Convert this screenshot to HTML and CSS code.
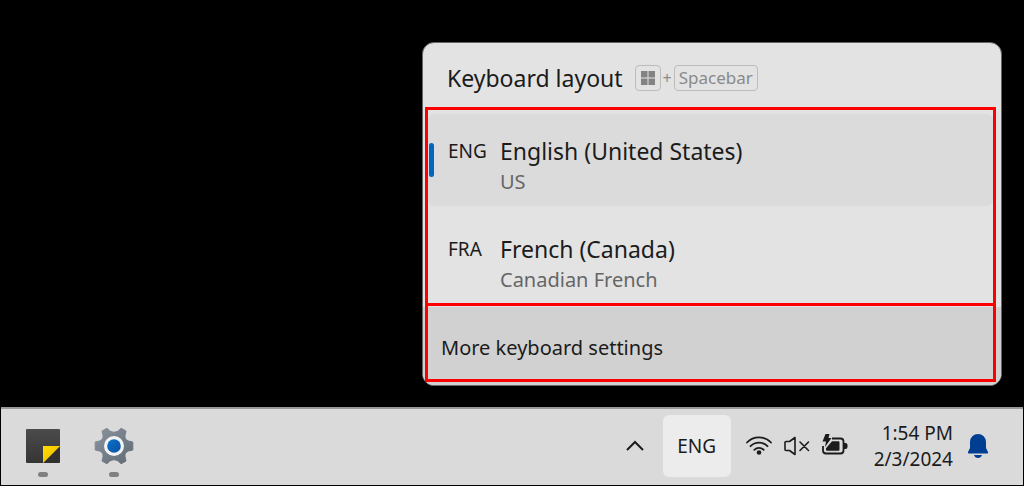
FILE: index.html
```html
<!DOCTYPE html>
<html lang="en">
<head>
<meta charset="utf-8">
<meta name="viewport" content="width=device-width, initial-scale=1">
<title>Keyboard layout</title>
<link rel="stylesheet" href="styles.css">
</head>
<body class="desktop">
<main class="workspace">
  <section class="flyout" aria-labelledby="flyout-title">
    <header class="flyout-header">
      <h1 class="flyout-title" id="flyout-title">Keyboard layout</h1>
      <div class="shortcut">
        <kbd class="key key-win"><svg width="14" height="14" viewBox="0 0 14 14" role="img" aria-label="Windows"><path fill="#838383" d="M0 0h6.500v6.500H0zM7.500 0H14v6.500H7.500zM0 7.500h6.500V14H0zM7.500 7.500H14V14H7.500z"/></svg></kbd>
        <span class="plus">+</span>
        <kbd class="key">Spacebar</kbd>
      </div>
    </header>
    <div class="layouts">
      <button class="layout layout-active" type="button" aria-pressed="true">
        <span class="layout-code">ENG</span>
        <span class="layout-text"><span class="layout-name">English (United States)</span><span class="layout-variant">US</span></span>
      </button>
      <button class="layout" type="button" aria-pressed="false">
        <span class="layout-code">FRA</span>
        <span class="layout-text"><span class="layout-name">French (Canada)</span><span class="layout-variant">Canadian French</span></span>
      </button>
      <div class="highlight"></div>
    </div>
    <footer class="flyout-footer">
      <a class="more" href="#settings">More keyboard settings</a>
      <div class="highlight highlight-footer"></div>
    </footer>
  </section>
</main>
<nav class="taskbar" aria-label="Taskbar">
  <div class="apps">
    <button class="app" type="button" aria-label="Sticky Notes">
      <svg width="40" height="40" viewBox="0 0 40 40">
        <defs>
          <linearGradient id="note" x1="0" y1="0" x2="0" y2="1"><stop offset="0" stop-color="#4b4b4b"/><stop offset="1" stop-color="#353535"/></linearGradient>
          <linearGradient id="fold" x1="0" y1="0" x2="1" y2="1"><stop offset="0" stop-color="#ffdc00"/><stop offset="1" stop-color="#efb900"/></linearGradient>
        </defs>
        <path fill="url(#note)" d="M4 3h32a1 1 0 0 1 1 1v16L20 37H4a1 1 0 0 1-1-1V4a1 1 0 0 1 1-1z"/>
        <path fill="#303030" d="M37 20v16a1 1 0 0 1-1 1H20z"/>
        <path fill="url(#fold)" d="M20 20h17L20 37z"/>
      </svg>
    </button>
    <button class="app" type="button" aria-label="Settings">
      <svg width="40" height="40" viewBox="0 0 40 40">
        <defs>
          <linearGradient id="gear" x1="0" y1="0" x2="1" y2="1"><stop offset="0" stop-color="#8b949d"/><stop offset="1" stop-color="#5f6a75"/></linearGradient>
          <linearGradient id="hub" x1="0" y1="0" x2="1" y2="1"><stop offset="0" stop-color="#0a73cc"/><stop offset="1" stop-color="#0b4fa0"/></linearGradient>
        </defs>
        <path fill="url(#gear)" stroke="url(#gear)" stroke-linejoin="round" d="M13 2.200L16 5.200Q20 7.500 24 5.200L27 2.200L32 5L31 9.500Q30.500 13.500 34.500 15L38.800 16V24L34.500 25Q30.500 26.500 31 30.500L32 35L27 37.800L24 34.800Q20 32.500 16 34.800L13 37.800L8 35L9 30.500Q9.500 26.500 5.500 25L1.200 24V16L5.500 15Q9.500 13.500 9 9.500L8 5Z"/>
        <circle cx="20" cy="20" r="10" fill="#f2f3f4"/>
        <circle cx="20" cy="20" r="6.800" fill="url(#hub)"/>
      </svg>
    </button>
  </div>
  <div class="tray">
    <button class="tray-icon chevron" type="button" aria-label="Show hidden icons">
      <svg width="20" height="20" viewBox="0 0 20 20" fill="none" stroke="#1b1b1b" stroke-width="2"><path d="M2 14l8-8 8 8"/></svg>
    </button>
    <button class="language" type="button">ENG</button>
    <button class="tray-icon status" type="button" aria-label="Network, volume and battery">
      <svg width="28" height="24" viewBox="0 0 28 24" fill="none" stroke="#1b1b1b" stroke-width="1.800" stroke-linecap="round"><path d="M2 8.500A16.500 16.500 0 0 1 26 8.500M5.500 12.200A12 12 0 0 1 22.500 12.200M9.300 15.800A6.700 6.700 0 0 1 18.700 15.800"/><circle cx="14" cy="18.500" r="2.300" fill="#1b1b1b" stroke="none"/></svg>
      <svg width="28" height="24" viewBox="0 0 28 24" fill="none" stroke="#1b1b1b" stroke-width="1.600" stroke-linejoin="round" stroke-linecap="round"><path d="M2 8.500q0-1 1-1h3.500L12 3.500v17L6.500 16.500H3q-1 0-1-1zM17 8l8.500 8.500M25.500 8L17 16.500"/></svg>
      <svg width="28" height="24" viewBox="0 0 28 24"><path d="M11 4.500H19.500Q22.500 4.500 22.500 7.500V16.500Q22.500 19.500 19.500 19.500H5Q2 19.500 2 16.500V12" fill="none" stroke="#1b1b1b" stroke-width="1.800"/><path fill="#1b1b1b" d="M11 7.300h6.500q1 0 1 1v7.400q0 1-1 1H6q-1 0-1-1v-1.500zM23 9h1.500q2 0 2 2v2q0 2-2 2H23zM4.500 0h4L7.500 4H10.500L4 13L5 7.500H1.500z"/></svg>
    </button>
    <button class="clock" type="button"><span>1:54 PM</span><span>2/3/2024</span></button>
    <button class="tray-icon" type="button" aria-label="Notifications">
      <svg width="22" height="26" viewBox="0 0 22 26" fill="#003e92"><path d="M11 1a8 8 0 0 1 8 8v6l2 4q.5 1.500-1 1.500H2q-1.500 0-1-1.500l2-4V9a8 8 0 0 1 8-8zM7 22h8q-1 3-4 3t-4-3z"/></svg>
    </button>
  </div>
</nav>
</body>
</html>
```
FILE: styles.css
```css
* { box-sizing: border-box; }
.desktop {
  margin: 0;
  min-height: 100vh;
  display: flex;
  flex-direction: column;
  background: #000;
  color: #1b1b1b;
  font-family: "Noto Sans", "Open Sans", sans-serif;
}
button {
  font: inherit;
  color: inherit;
  border: 0;
  padding: 0;
  background: none;
}
svg { display: block; }
.workspace {
  flex: 1;
  display: flex;
  justify-content: flex-end;
  align-items: flex-end;
  padding: 20px 22px 21px;
}
.flyout {
  width: 100%;
  max-width: 580px;
  background: #e3e3e3;
  border: 1px solid #666;
  border-radius: 12px;
}
.flyout-header {
  display: flex;
  align-items: center;
  gap: 12px;
  min-height: 64px;
  padding: 6px 24px 0;
}
.flyout-title {
  margin: 0;
  font-size: 23px;
  line-height: 32px;
  font-weight: 400;
}
.shortcut {
  display: flex;
  align-items: center;
  gap: 2px;
  color: #8a8a8a;
  font-size: 17px;
  line-height: 22px;
}
.key {
  display: flex;
  align-items: center;
  padding: 0 4px;
  min-height: 26px;
  border: 1px solid #bcbcbc;
  border-radius: 4px;
  font-family: inherit;
  font-size: 17px;
}
.key-win { padding: 0 5px; }
.plus { font-size: 16px; }
.layouts {
  position: relative;
  display: grid;
  gap: 6px;
  padding: 7px 8px 3px 5px;
}
.layout {
  position: relative;
  display: flex;
  min-height: 92px;
  padding: 20px 20px 0;
  border-radius: 6px;
  text-align: left;
}
.layout-active { background: #dbdbdb; }
.layout-active::before {
  content: "";
  position: absolute;
  left: 1px;
  top: 29px;
  width: 5px;
  height: 34px;
  border-radius: 3px;
  background: #0067c0;
}
.layout-code {
  width: 52px;
  font-size: 19px;
  line-height: 34px;
}
.layout-text { display: grid; align-content: start; }
.layout-name { font-size: 23px; line-height: 34px; }
.layout-variant { font-size: 20px; line-height: 28px; color: #666; }
.highlight {
  position: absolute;
  inset: 0 5px 1px 2px;
  border: 3px solid #f00;
  pointer-events: none;
}
.highlight-footer { inset: -4px 5px 3px 2px; }
.flyout-footer {
  position: relative;
  min-height: 78px;
  display: flex;
  align-items: center;
  padding: 4px 18px 0;
  background: #d1d1d1;
  border-radius: 0 0 11px 11px;
}
.more { color: inherit; text-decoration: none; font-size: 20px; line-height: 28px; }
.taskbar {
  display: flex;
  justify-content: space-between;
  min-height: 78px;
  margin: 0 1px 1px;
  padding: 0 34px 0 22px;
  background: #dadada;
  border-top: 2px solid #999;
}
.apps { display: flex; gap: 31px; }
.app {
  display: flex;
  flex-direction: column;
  align-items: center;
  padding-top: 17px;
  gap: 6px;
}
.app::after {
  content: "";
  width: 10px;
  height: 5px;
  border-radius: 3px;
  background: #808080;
}
.tray { display: flex; align-items: center; padding-bottom: 2px; }
.chevron { margin-right: 18px; }
.language {
  width: 68px;
  height: 62px;
  margin-right: 14px;
  border-radius: 6px;
  background: #ececec;
  font-size: 19px;
}
.status { display: flex; gap: 10px; margin-right: 25px; }
.clock {
  display: grid;
  margin-right: 14px;
  text-align: right;
  font-size: 19px;
  line-height: 26px;
}
```
